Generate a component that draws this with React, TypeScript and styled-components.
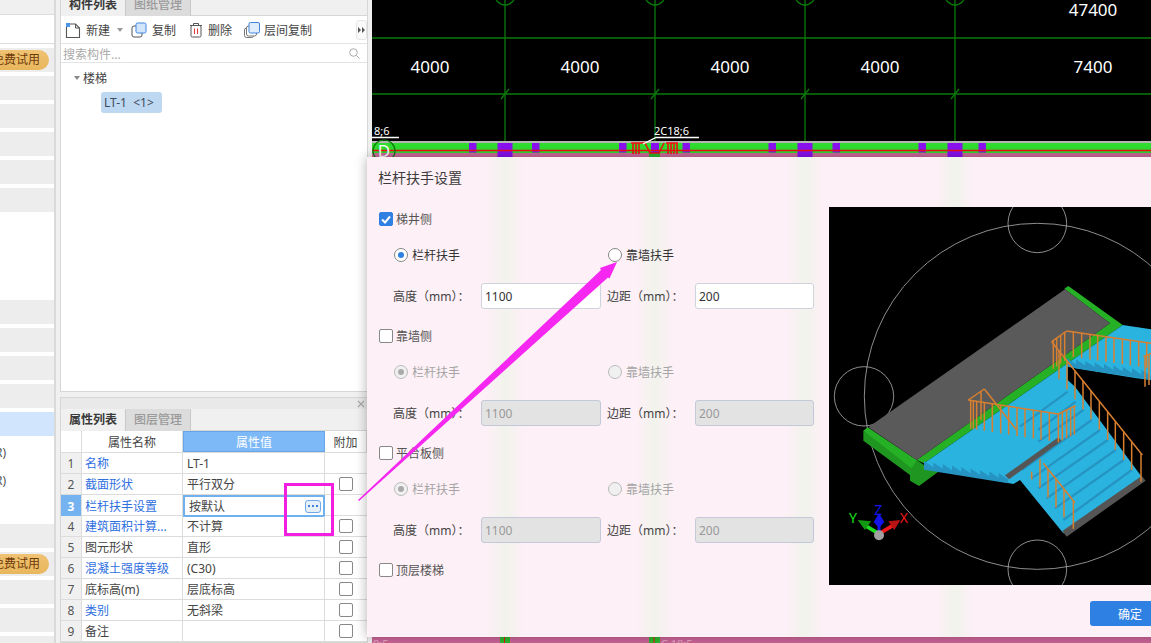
import React from "react";
import styled, { createGlobalStyle } from "styled-components";

const Global = createGlobalStyle`
  html, body { margin: 0; padding: 0; background: #fff; }
  body { font-family: "Noto Sans", "Noto Sans CJK SC", sans-serif; font-size: 12px; color: #333; }
  * { box-sizing: border-box; }
`;

const Page = styled.div`
  position: relative; display: flex; width: 1151px; height: 643px; overflow: hidden; background: #f0f0f0;
`;
const Rail = styled.div`
  flex: none; width: 56px; height: 643px; overflow: hidden; background: #fff; border-right: 2px solid #d9d9d9;
`;
const RailHead = styled.div`
  height: 15px; background: #f0f0f0; border-bottom: 1px solid #ddd;
`;
const RailBlank = styled.div`
  height: 29px; border-bottom: 1px solid #ddd; margin-bottom: 4px;
`;
const RailRow = styled.div<{ $tone: string }>`
  display: flex; align-items: center; justify-content: flex-end; height: 24px; margin-bottom: 4px; padding-right: 5px;
  white-space: nowrap; color: #444;
  background: ${(p) => (p.$tone === "blue" ? "#d1e6fc" : p.$tone === "grey" ? "#ededed" : "#fff")};
`;
const Pill = styled.span`
  flex: none; height: 20px; line-height: 20px; padding: 0 9px 0 12px; border-radius: 10px; color: #6e3a0a;
  background: linear-gradient(180deg, #f0c272, #e8b65c);
`;
const ClipText = styled.span`
  flex: none; padding-right: 43px; color: #555;
`;

const PanelColumn = styled.div`
  flex: none; width: 316px; height: 643px; padding: 0 4px; display: flex; flex-direction: column; gap: 5px;
`;
const Panel = styled.div<{ $grow?: boolean }>`
  display: flex; flex-direction: column; width: 308px; background: #fff; border: 1px solid #d6d6d6; border-top: 0;
  height: ${(p) => (p.$grow ? "392px" : "246px")};
  overflow: hidden;
`;
const TabBar = styled.div<{ $clip?: boolean }>`
  flex: none; display: flex; height: 22px; background: #f0f0f0; margin-top: ${(p) => (p.$clip ? "-6px" : "0")};
  border-bottom: 1px solid #d6d6d6;
`;
const Tab = styled.div<{ $on?: boolean }>`
  width: 65px; height: 22px; line-height: 21px; text-align: center; font-weight: ${(p) => (p.$on ? 600 : 500)};
  color: ${(p) => (p.$on ? "#3a3a3a" : "#9a9a9a")};
  background: ${(p) => (p.$on ? "#f0f0f0" : "#dcdcdc")};
  border-right: 1px solid #c9c9c9;
`;
const Toolbar = styled.div`
  flex: none; display: flex; align-items: center; gap: 13px; height: 28px; padding: 1px 0 0 4px; border-bottom: 1px solid #e3e3e3; color: #444;
`;
const ToolItem = styled.div`
  display: flex; align-items: center; gap: 5px; white-space: nowrap;
`;
const FloorItem = styled(ToolItem)`
  margin-left: -1px; gap: 4px;
`;
const Caret = styled.span`
  width: 0; height: 0; margin: 0 -5px 0 2px; border: 3px solid transparent; border-top: 4px solid #999; border-bottom: 0;
`;
const MoreButton = styled.div`
  margin-left: auto; margin-right: 0; width: 11px; height: 20px; border: 1px solid #e6e6e6; border-radius: 3px;
  display: flex; align-items: center; justify-content: center; background: #fafafa;
`;
const Search = styled.div`
  flex: none; display: flex; align-items: center; justify-content: space-between; height: 19px; padding: 1px 7px 0 2px;
  border-bottom: 1px solid #e3e3e3; color: #aaa;
`;
const TreeArea = styled.div`
  flex: 1; padding: 6px 0 0 13px;
`;
const TreeHead = styled.div`
  display: flex; align-items: center; gap: 3px; height: 18px; color: #444;
`;
const TreeCaret = styled.span`
  width: 0; height: 0; border: 3.5px solid transparent; border-top: 4px solid #888; border-bottom: 0;
`;
const Chip = styled.div`
  width: 61px; height: 21px; line-height: 21px; margin: 5px 0 0 27px; padding-left: 3px; background: #bfd8f2; border-radius: 3px; color: #3d4a59; white-space: pre;
`;

const CloseBar = styled.div`
  flex: none; display: flex; align-items: center; justify-content: flex-end; height: 12px; padding-right: 1px; background: #e9e9e9; border-top: 1px solid #d6d6d6;
`;
const Row = styled.div<{ $head?: boolean }>`
  flex: none; display: grid; grid-template-columns: 21px 101px 142px 42px; height: ${(p) => (p.$head ? "22px" : "21px")}; border-bottom: 1px solid #dcdcdc;
`;
const Cell = styled.div<{ $blue?: boolean }>`
  display: flex; align-items: center; min-width: 0; white-space: nowrap; border-right: 1px solid #dcdcdc; padding: 0 3px;
  color: ${(p) => (p.$blue ? "#2f6fdf" : "#444")};
`;
const ValueCell = styled(Cell)`
  padding-left: 4px;
`;
const IndexCell = styled(Cell)<{ $sel?: boolean }>`
  justify-content: center; padding: 0;
  font-weight: ${(p) => (p.$sel ? 700 : 400)};
  color: ${(p) => (p.$sel ? "#fff" : "#555")};
  background: ${(p) => (p.$sel ? "#74b3f0" : "#f0f0f0")};
`;
const HeadCell = styled(Cell)<{ $accent?: boolean }>`
  justify-content: center;
  color: ${(p) => (p.$accent ? "#fff" : "#444")};
  background: ${(p) => (p.$accent ? "#7db9f6" : "#fff")};
  border: ${(p) => (p.$accent ? "1px solid #66a6e6" : "")};
`;
const EditCell = styled(Cell)`
  justify-content: space-between; border: 2px solid #6fb0ee; padding: 0 2px 0 4px; margin: 0;
`;
const DotsButton = styled.span`
  display: flex; align-items: center; justify-content: center; gap: 2px; width: 16px; height: 13px; border: 1px solid #6fa8e8; border-radius: 3px; background: #e6f0fb;
`;
const Dot = styled.i`
  width: 2px; height: 2px; background: #3f83d8; display: block;
`;
const CheckCell = styled.div`
  display: flex; align-items: center; justify-content: flex-start; padding-left: 14px;
`;
const Box = styled.span<{ $on?: boolean }>`
  flex: none; display: flex; align-items: center; justify-content: center; width: 14px; height: 14px; border-radius: 2px;
  border: 1px solid ${(p) => (p.$on ? "#2e80e2" : "#888")};
  background: ${(p) => (p.$on ? "#2e80e2" : "#fff")};
`;

const Canvas = styled.svg`
  flex: none; display: block; width: 779px; height: 643px; background: #000;
`;

const Dialog = styled.section`
  position: absolute; left: 367px; top: 157px; width: 820px; height: 480px;
  box-shadow: 0 0 11px rgba(0, 0, 0, 0.32);
  background:
    linear-gradient(90deg,
      #fdf0f6 0, #fdf0f6 120px, #f1f3ec 138px, #fdf0f6 156px,
      #fdf0f6 270px, #f1f3ec 288px, #fdf0f6 306px,
      #fdf0f6 420px, #f1f3ec 438px, #fdf0f6 456px,
      #fdf0f6 570px, #f1f3ec 588px, #fdf0f6 606px, #fdf0f6 100%);
`;
const DialogTitle = styled.h2`
  margin: 0; height: 50px; padding: 12px 0 0 11px; font-size: 14px; line-height: 18px; font-weight: 400; color: #3c3c3c;
`;
const DialogBody = styled.div`
  display: flex; height: 378px;
`;
const Form = styled.div`
  flex: none; width: 462px; padding: 2px 0 0 12px;
`;
const Section = styled.div`
  height: 117px;
`;
const CheckRow = styled.label`
  display: flex; align-items: center; gap: 3px; height: 20px; color: #555;
`;
const OptionGrid = styled.div`
  display: grid; grid-template-columns: 214px 214px; padding-left: 14px;
`;
const RadioRow = styled(OptionGrid)`
  margin-top: 16px; height: 20px;
`;
const FieldRow = styled(OptionGrid)`
  margin-top: 18px; height: 26px;
`;
const RadioLabel = styled.label<{ $off?: boolean }>`
  display: flex; align-items: center; gap: 4px; padding-left: 1px; color: ${(p) => (p.$off ? "#a5a5a5" : "#333")};
`;
const RadioMark = styled.span<{ $on?: boolean; $off?: boolean }>`
  flex: none; display: flex; align-items: center; justify-content: center; width: 14px; height: 14px; border-radius: 50%;
  border: 1px solid ${(p) => (p.$off ? "#bbb" : "#888")};
  background: ${(p) => (p.$off ? "#f0f0f0" : "#fff")};
  &::after {
    content: ""; display: ${(p) => (p.$on ? "block" : "none")}; width: 6px; height: 6px; border-radius: 50%;
    background: ${(p) => (p.$off ? "#aaa" : "#2e80e2")};
  }
`;
const Field = styled.label`
  display: flex; align-items: center; color: #444;
  &:last-child input { width: 119px; }
`;
const FieldName = styled.span`
  flex: none; width: 88px; white-space: nowrap;
`;
const FieldInput = styled.input`
  width: 120px; height: 26px; padding: 0 3px; border: 1px solid #cfd4dc; border-radius: 3px; outline: 0;
  font: 12px "Noto Sans", sans-serif; color: #333; background: #fff;
  &:disabled { background: #e3e3e3; border-color: #c3c9d6; color: #999; }
`;
const Picture = styled.svg`
  flex: none; display: block; width: 322px; height: 378px; background: #000;
`;
const Footer = styled.div`
  display: flex; justify-content: flex-end; padding: 16px 17px 0 0;
`;
const Confirm = styled.button`
  width: 80px; height: 25px; border: 0; border-radius: 3px; background: #2e80e2; color: #fff; padding: 0;
  font: 12px "Noto Sans", "Noto Sans CJK SC", sans-serif;
`;
const Annotation = styled.svg`
  position: absolute; left: 0; top: 0; width: 1151px; height: 643px; pointer-events: none;
`;
const MarkBox = styled.div`
  position: absolute; left: 284px; top: 483px; width: 50px; height: 53px; border: 3px solid #f21fe0;
`;

const NewIcon = () => (
  <svg width="16" height="17" viewBox="0 0 16 17">
    <path d="M1.5 4.5V15.5H14.5V6L10.5 2H5" fill="#fff" stroke="#555" strokeWidth="1.1" />
    <path d="M10.5 2V6H14.5" fill="none" stroke="#555" />
    <rect x="1" y="1" width="4" height="4" fill="#4d93e6" />
  </svg>
);
const CopyIcon = () => (
  <svg width="16" height="16" viewBox="0 0 16 16">
    <rect x="1" y="4" width="10" height="11" rx="2" fill="#fff" stroke="#555" />
    <rect x="5" y="1" width="10" height="10" rx="1.5" fill="#d3e5fa" stroke="#3e86dc" />
  </svg>
);
const TrashIcon = () => (
  <svg width="14" height="16" viewBox="0 0 14 16">
    <path d="M1 3.5H13M4.5 3.5V1.5H9.5V3.5" fill="none" stroke="#555" />
    <rect x="2" y="3.5" width="10" height="11.5" rx="1.5" fill="#fff" stroke="#555" />
    <path d="M5.5 6.5V12M8.5 6.5V12" stroke="#e03a3a" strokeWidth="1.1" />
  </svg>
);
const FloorCopyIcon = () => (
  <svg width="16" height="16" viewBox="0 0 16 16">
    <rect x="0.5" y="6" width="9" height="9.5" rx="2" fill="#fff" stroke="#777" />
    <rect x="2.5" y="4" width="10" height="10" rx="2" fill="#fff" stroke="#777" />
    <rect x="5" y="0.5" width="10.5" height="10.5" rx="1.5" fill="#e0edfb" stroke="#3e86dc" />
  </svg>
);

type PropRow = { n: number; name: string; value: string; blue?: boolean; check?: boolean };
const props: PropRow[] = [
  { n: 1, name: "名称", value: "LT-1", blue: true },
  { n: 2, name: "截面形状", value: "平行双分", blue: true, check: true },
  { n: 3, name: "栏杆扶手设置", value: "按默认", blue: true },
  { n: 4, name: "建筑面积计算...", value: "不计算", blue: true, check: true },
  { n: 5, name: "图元形状", value: "直形", check: true },
  { n: 6, name: "混凝土强度等级", value: "(C30)", blue: true, check: true },
  { n: 7, name: "底标高(m)", value: "层底标高", check: true },
  { n: 8, name: "类别", value: "无斜梁", blue: true, check: true },
  { n: 9, name: "备注", value: "", check: true },
];

const railRows: Array<{ tone: string; pill?: boolean; text?: string }> = [
  { tone: "grey", pill: true }, { tone: "grey" }, { tone: "grey" }, { tone: "grey" }, { tone: "grey" }, { tone: "grey" },
  { tone: "white" }, { tone: "white" }, { tone: "white" },
  { tone: "grey" }, { tone: "grey" }, { tone: "grey" }, { tone: "grey" },
  { tone: "blue" },
  { tone: "white", text: "R)" }, { tone: "white", text: "R)" }, { tone: "white" },
  { tone: "grey" }, { tone: "grey", pill: true }, { tone: "grey" }, { tone: "grey" }, { tone: "grey" },
];

const gridX = [505, 655, 805, 955];
const smallPurple = [472.5, 535.5, 622.5, 686, 772, 836, 922, 982];

const CadDrawing = () => (
  <Canvas viewBox="372 0 779 643">
    <g stroke="#0a7a0a" strokeWidth="1.3" fill="none">
      <path d="M372 38H1151M372 94H1151" />
      {gridX.map((x) => (
        <g key={x}>
          <path d={`M${x} 0V160`} />
          <circle cx={x} cy={-5} r={10} />
          <path d={`M${x - 4} 99L${x + 4} 89`} />
        </g>
      ))}
    </g>
    <g fill="#fff" fontFamily="'Noto Sans', sans-serif" fontSize="17" textAnchor="middle">
      <text x="430" y="73">4000</text>
      <text x="580" y="73">4000</text>
      <text x="730" y="73">4000</text>
      <text x="880" y="73">4000</text>
      <text x="1093" y="73">7400</text>
      <text x="1093" y="16">47400</text>
    </g>
    <rect x="372" y="141" width="779" height="2" fill="#b5b5b5" />
    <rect x="372" y="143" width="779" height="10" fill="#2fdc2f" />
    <rect x="372" y="153" width="779" height="5" fill="#d06a9c" />
    {smallPurple.map((x) => (
      <rect key={x} x={x - 3.5} y="143" width="7.5" height="9.5" fill="#8a10f0" />
    ))}
    {[505, 805, 955].map((x) => (
      <rect key={x} x={x - 7.5} y="143" width="15" height="15" fill="#8a10f0" />
    ))}
    <rect x="651" y="143" width="8" height="10" fill="#8a10f0" />
    <rect x="649" y="153" width="11" height="5" fill="#2fb82f" />
    <path d="M372 150.5H1151" stroke="#f01010" strokeWidth="1.3" />
    <g stroke="#f01010" strokeWidth="1.6" fill="none">
      <path d="M631 143H641M633 143V154M636 143V154M639 143V154" />
      <path d="M641 143H645L650 153H659L664 143" />
      <path d="M666 143H678M668 143V154M671 143V154M674 143V154M677 143V154" />
    </g>
    <circle cx="384" cy="151" r="11" fill="none" stroke="#0a7a0a" strokeWidth="1.2" />
    <text x="384" y="157" fill="#fff" fontSize="17" textAnchor="middle" fontFamily="'Noto Sans', sans-serif">D</text>
    <g fill="#fff" fontFamily="'Noto Sans', sans-serif" fontSize="11">
      <text x="374" y="135">8;6</text>
      <text x="654" y="135">2C18;6</text>
    </g>
    <path d="M372 137.5H399M699 137.5H656L643 144" stroke="#fff" strokeWidth="1.3" fill="none" />
    <rect x="372" y="637" width="779" height="6" fill="#cc6699" />
    <rect x="500" y="637" width="10" height="6" fill="#2fb82f" />
    <rect x="649" y="637" width="11" height="6" fill="#2fb82f" />
    <path d="M504.5 637V643M654 637V643" stroke="#f01010" />
    <g fill="#eaa8c8" fontSize="11" fontFamily="'Noto Sans', sans-serif">
      <text x="373" y="648">8:5</text>
      <text x="661" y="648">C 18:5</text>
    </g>
  </Canvas>
);

const rail = (x1: number, y1: number, x2: number, y2: number, xs: number[], drop: number) => {
  const slope = (y2 - y1) / (x2 - x1);
  return (
    <g>
      <path d={`M${x1} ${y1}L${x2} ${y2}`} />
      {xs.map((x) => {
        const y = y1 + (x - x1) * slope;
        return <path key={x} d={`M${x} ${y}V${y + drop}`} />;
      })}
    </g>
  );
};

const teeth = (x: number, y: number, dx: number, dy: number, n: number) => {
  const pts: string[] = [];
  for (let i = 0; i < n; i++) {
    pts.push(`${x + i * dx},${y + i * dy - 14}`);
    pts.push(`${x + (i + 1) * dx},${y + (i + 1) * dy}`);
  }
  pts.push(`${x + n * dx},${y + n * dy + 12}`);
  pts.push(`${x},${y + 12}`);
  return pts.join(" ");
};

const StairPicture = () => (
  <Picture viewBox="12 21 966 1134">
    <g fill="none" stroke="#a8a8a8" strokeWidth="2.5">
      <circle cx="637" cy="589" r="519" />
      <circle cx="637" cy="70" r="88" />
      <circle cx="637" cy="1108" r="88" />
      <circle cx="117" cy="589" r="89" />
    </g>
    <polygon points="115,692 115,722 255,825 255,842 282,858 340,815 297,795 275,780" fill="#1f961f" />
    <polygon points="115,692 128,682 275,780 260,805" fill="#25b025" />
    <polygon points="718,266 730,258 893,375 728,490 297,790 275,780 855,370" fill="#25b025" />
    <polygon points="720,268 855,370 275,780 130,682" fill="#5a5a5a" />
    <polygon points="728,490 893,375 978,388 978,540 935,535 750,505" fill="#2bb3df" />
    <polygon points={teeth(725, 488, 28, 4.4, 9)} fill="#2594c2" />
    <polygon points="297,790 728,490 728,540 750,560 950,830 715,1000 585,840 565,852 297,800" fill="#2bb3df" />
    <polygon points={teeth(297, 797, 28, 4.5, 9)} fill="#2594c2" />
    <g stroke="#2594c2" strokeWidth="7" fill="none">
      <path d="M728 575L585 680M752 605L640 690M775 630L640 725" />
      <path d="M800 660L590 810M825 690L620 835M848 720L640 865M872 750L665 895M896 780L690 925M920 810L715 960" />
    </g>
    <polygon points="540,826 700,712 710,722 552,838" fill="#555" />
    <polygon points="712,993 950,828 962,842 725,1010" fill="#555" />
    <g stroke="#d98030" strokeWidth="4.5" fill="none">
      {rail(680, 425, 952, 765, [702, 726, 750, 774, 798, 823, 848, 871, 896, 920, 948], 85)}
      {rail(725, 393, 978, 430, [745, 770, 795, 818, 843, 867, 892, 916, 941, 965], 75)}
      {rail(680, 425, 725, 393, [685, 695, 707, 719], 85)}
      {rail(430, 600, 700, 642, [437, 445, 455, 478, 502, 527, 551, 576, 600, 625, 648, 673], 85)}
      {rail(430, 600, 478, 567, [468], 85)}
      <path d="M478 567L575 690" />
      {rail(700, 642, 752, 617, [700, 712, 725, 737, 748], 85)}
      {rail(655, 790, 750, 908, [645, 669, 693, 717, 745], 85)}
      <path d="M620 815V838" />
      <path d="M955 470L978 460M960 470V560M972 465V555" />
    </g>
    <g strokeLinecap="round" fill="none" strokeWidth="11">
      <path d="M160 1000L116 974" stroke="#1edc1e" />
      <path d="M164 1000L208 974" stroke="#f01818" />
      <path d="M162 1000V960" stroke="#1414e8" strokeWidth="9" />
    </g>
    <polygon points="98,960 138,964 120,990" fill="#119a11" />
    <polygon points="226,960 190,964 208,990" fill="#b81212" />
    <polygon points="162,940 178,966 162,984 146,966" fill="#1414e8" />
    <circle cx="162" cy="1006" r="15" fill="#a0a0a0" />
    <g fontFamily="'Noto Sans', sans-serif" fontSize="42">
      <text x="72" y="968" fill="#18e018">Y</text>
      <text x="148" y="946" fill="#1414e8">Z</text>
      <text x="224" y="968" fill="#f01818">X</text>
    </g>
  </Picture>
);

const OptionSet = ({ off, h, m }: { off?: boolean; h: string; m: string }) => (
  <>
    <RadioRow>
      <RadioLabel $off={off}><RadioMark $on $off={off} />栏杆扶手</RadioLabel>
      <RadioLabel $off={off}><RadioMark $off={off} />靠墙扶手</RadioLabel>
    </RadioRow>
    <FieldRow>
      <Field><FieldName>高度（mm）：</FieldName><FieldInput defaultValue={h} disabled={off} /></Field>
      <Field><FieldName>边距（mm）：</FieldName><FieldInput defaultValue={m} disabled={off} /></Field>
    </FieldRow>
  </>
);

const Tick = () => (
  <svg width="10" height="9" viewBox="0 0 10 9"><path d="M1 4.5L4 7.5L9 1.5" fill="none" stroke="#fff" strokeWidth="2" /></svg>
);

export default function App() {
  return (
    <Page>
      <Global />
      <Rail>
        <RailHead />
        <RailBlank />
        {railRows.map((r, i) => (
          <RailRow key={i} $tone={r.tone}>
            {r.pill && <Pill>免费试用</Pill>}
            {r.text && <ClipText>{r.text}</ClipText>}
          </RailRow>
        ))}
      </Rail>
      <PanelColumn>
        <Panel $grow>
          <TabBar $clip>
            <Tab $on>构件列表</Tab>
            <Tab>图纸管理</Tab>
          </TabBar>
          <Toolbar>
            <ToolItem><NewIcon />新建<Caret /></ToolItem>
            <ToolItem><CopyIcon />复制</ToolItem>
            <ToolItem><TrashIcon />删除</ToolItem>
            <FloorItem><FloorCopyIcon />层间复制</FloorItem>
            <MoreButton>
              <svg width="7" height="6" viewBox="0 0 7 6"><path d="M0 0L3 3L0 6ZM4 0L7 3L4 6Z" fill="#555" /></svg>
            </MoreButton>
          </Toolbar>
          <Search>
            搜索构件...
            <svg width="11" height="11" viewBox="0 0 11 11"><circle cx="4.5" cy="4.5" r="3.8" fill="none" stroke="#aaa" /><path d="M7.5 7.5L10.5 10.5" stroke="#aaa" /></svg>
          </Search>
          <TreeArea>
            <TreeHead><TreeCaret />楼梯</TreeHead>
            <Chip>LT-1  &lt;1&gt;</Chip>
          </TreeArea>
        </Panel>
        <Panel>
          <CloseBar>
            <svg width="10" height="10" viewBox="0 0 10 10"><path d="M2 2L8 8M8 2L2 8" stroke="#aaa" strokeWidth="1.2" /></svg>
          </CloseBar>
          <TabBar>
            <Tab $on>属性列表</Tab>
            <Tab>图层管理</Tab>
          </TabBar>
          <Row $head>
            <HeadCell />
            <HeadCell>属性名称</HeadCell>
            <HeadCell $accent>属性值</HeadCell>
            <HeadCell>附加</HeadCell>
          </Row>
          {props.map((p) => (
            <Row key={p.n}>
              <IndexCell $sel={p.n === 3}>{p.n}</IndexCell>
              <Cell $blue={p.blue}>{p.name}</Cell>
              {p.n === 3 ? (
                <EditCell>{p.value}<DotsButton><Dot /><Dot /><Dot /></DotsButton></EditCell>
              ) : (
                <ValueCell>{p.value}</ValueCell>
              )}
              <CheckCell>{p.check && <Box />}</CheckCell>
            </Row>
          ))}
        </Panel>
      </PanelColumn>
      <CadDrawing />
      <Dialog>
        <DialogTitle>栏杆扶手设置</DialogTitle>
        <DialogBody>
          <Form>
            <Section>
              <CheckRow><Box $on><Tick /></Box>梯井侧</CheckRow>
              <OptionSet h="1100" m="200" />
            </Section>
            <Section>
              <CheckRow><Box />靠墙侧</CheckRow>
              <OptionSet off h="1100" m="200" />
            </Section>
            <Section>
              <CheckRow><Box />平台板侧</CheckRow>
              <OptionSet off h="1100" m="200" />
            </Section>
            <CheckRow><Box />顶层楼梯</CheckRow>
          </Form>
          <StairPicture />
        </DialogBody>
        <Footer><Confirm>确定</Confirm></Footer>
      </Dialog>
      <MarkBox />
      <Annotation viewBox="0 0 1151 643">
        <polygon points="358,500 601,270 600,268 617,262 609.5,278.500 608,277.500 359,501" fill="#f527f0" />
      </Annotation>
    </Page>
  );
}
